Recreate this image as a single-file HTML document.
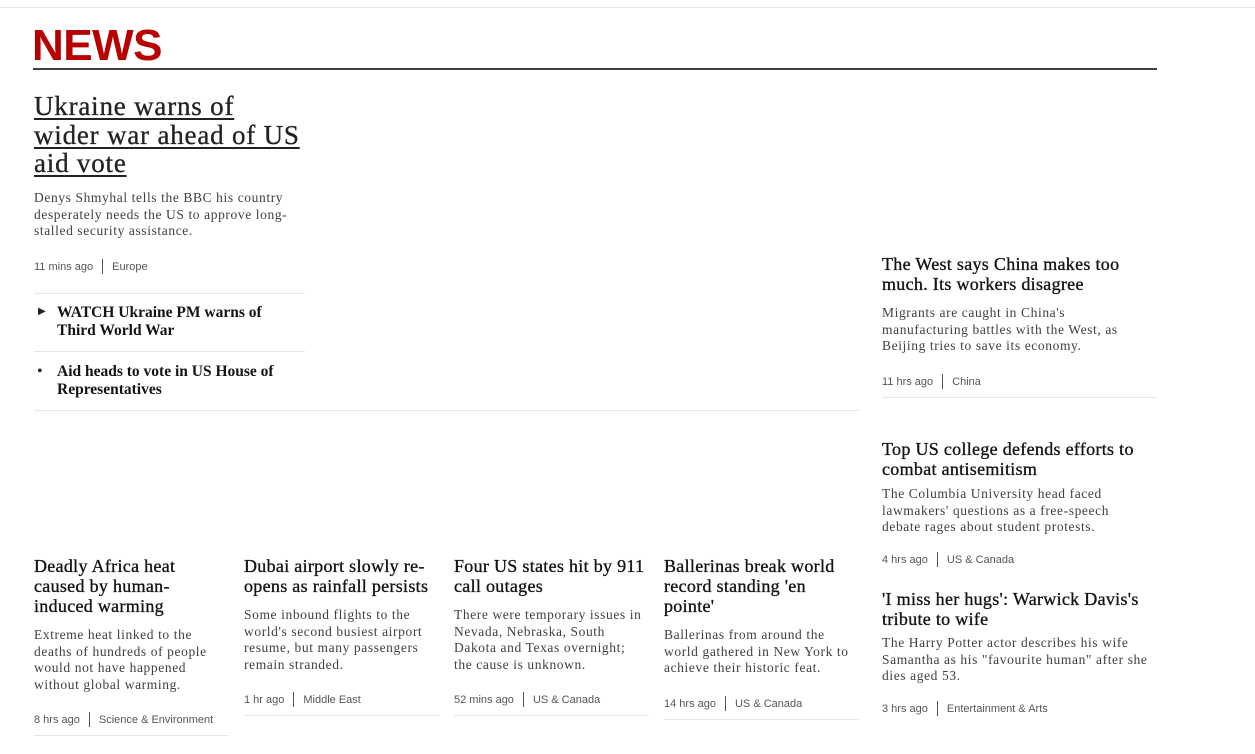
<!DOCTYPE html>
<html><head><meta charset="utf-8"><style>
*{margin:0;padding:0;box-sizing:border-box}
body{width:1255px;height:754px;background:#fff;position:relative;overflow:hidden;color:#202224;font-family:"Liberation Serif",serif}
.a{position:absolute;white-space:nowrap}
.h{font-size:18px;line-height:20px;font-weight:normal;color:#141414;letter-spacing:0.3px;-webkit-text-stroke:0.35px #141414}
.s{font-size:13.5px;line-height:16.5px;color:#3f3f42;letter-spacing:0.6px}
.m{font-size:11px;line-height:14px;font-family:"Liberation Sans",sans-serif;color:#545658;display:flex;align-items:center}
.m i{display:inline-block;width:1px;height:15px;background:#545658;margin:0 9px}
.ln{height:1px;background:#e6e6e6}
</style></head><body>
<div class="a ln" style="left:0;top:7px;width:1255px"></div>
<div class="a" style="left:32px;top:21px;font:bold 44px/50px 'Liberation Sans',sans-serif;color:#b80000;letter-spacing:-0.5px">NEWS</div>
<div class="a" style="left:33px;top:68px;width:1124px;height:2px;background:#3f3f42"></div>

<div class="a" style="left:34px;top:92px;font-size:27px;line-height:28.5px;letter-spacing:0.8px;text-decoration:underline;text-decoration-thickness:2px;text-underline-offset:3px;color:#202224;-webkit-text-stroke:0.3px #202224">Ukraine warns of<br>wider war ahead of US<br>aid vote</div>
<div class="a s" style="left:34px;top:190px">Denys Shmyhal tells the BBC his country<br>desperately needs the US to approve long-<br>stalled security assistance.</div>
<div class="a m" style="left:34px;top:259px">11 mins ago<i></i>Europe</div>
<div class="a ln" style="left:34px;top:293px;width:271px"></div>
<div class="a" style="left:38px;top:306px;font-size:10px">&#9654;</div>
<div class="a h" style="left:57px;top:304px;font-size:15.5px;line-height:18px;font-weight:bold;-webkit-text-stroke:0;letter-spacing:0">WATCH Ukraine PM warns of<br>Third World War</div>
<div class="a ln" style="left:34px;top:351px;width:271px"></div>
<div class="a" style="left:37px;top:363px;font-size:16px;line-height:18px">&#8226;</div>
<div class="a h" style="left:57px;top:363px;font-size:15.5px;line-height:18px;font-weight:bold;-webkit-text-stroke:0;letter-spacing:0">Aid heads to vote in US House of<br>Representatives</div>
<div class="a ln" style="left:34px;top:410px;width:826px"></div>

<div class="a h" style="left:882px;top:254px">The West says China makes too<br>much. Its workers disagree</div>
<div class="a s" style="left:882px;top:305px">Migrants are caught in China's<br>manufacturing battles with the West, as<br>Beijing tries to save its economy.</div>
<div class="a m" style="left:882px;top:374px">11 hrs ago<i></i>China</div>
<div class="a ln" style="left:882px;top:397px;width:275px"></div>

<div class="a h" style="left:882px;top:439px">Top US college defends efforts to<br>combat antisemitism</div>
<div class="a s" style="left:882px;top:486px">The Columbia University head faced<br>lawmakers' questions as a free-speech<br>debate rages about student protests.</div>
<div class="a m" style="left:882px;top:552px">4 hrs ago<i></i>US &amp; Canada</div>

<div class="a h" style="left:882px;top:589px">'I miss her hugs': Warwick Davis's<br>tribute to wife</div>
<div class="a s" style="left:882px;top:635px">The Harry Potter actor describes his wife<br>Samantha as his "favourite human" after she<br>dies aged 53.</div>
<div class="a m" style="left:882px;top:701px">3 hrs ago<i></i>Entertainment &amp; Arts</div>

<div class="a h" style="left:34px;top:556px">Deadly Africa heat<br>caused by human-<br>induced warming</div>
<div class="a s" style="left:34px;top:627px">Extreme heat linked to the<br>deaths of hundreds of people<br>would not have happened<br>without global warming.</div>
<div class="a m" style="left:34px;top:712px">8 hrs ago<i></i>Science &amp; Environment</div>
<div class="a ln" style="left:34px;top:735px;width:195px"></div>

<div class="a h" style="left:244px;top:556px">Dubai airport slowly re-<br>opens as rainfall persists</div>
<div class="a s" style="left:244px;top:607px">Some inbound flights to the<br>world's second busiest airport<br>resume, but many passengers<br>remain stranded.</div>
<div class="a m" style="left:244px;top:692px">1 hr ago<i></i>Middle East</div>
<div class="a ln" style="left:244px;top:715px;width:195px"></div>

<div class="a h" style="left:454px;top:556px">Four US states hit by 911<br>call outages</div>
<div class="a s" style="left:454px;top:607px">There were temporary issues in<br>Nevada, Nebraska, South<br>Dakota and Texas overnight;<br>the cause is unknown.</div>
<div class="a m" style="left:454px;top:692px">52 mins ago<i></i>US &amp; Canada</div>
<div class="a ln" style="left:454px;top:715px;width:195px"></div>

<div class="a h" style="left:664px;top:556px">Ballerinas break world<br>record standing 'en<br>pointe'</div>
<div class="a s" style="left:664px;top:627px">Ballerinas from around the<br>world gathered in New York to<br>achieve their historic feat.</div>
<div class="a m" style="left:664px;top:696px">14 hrs ago<i></i>US &amp; Canada</div>
<div class="a ln" style="left:664px;top:719px;width:195px"></div>
</body></html>
